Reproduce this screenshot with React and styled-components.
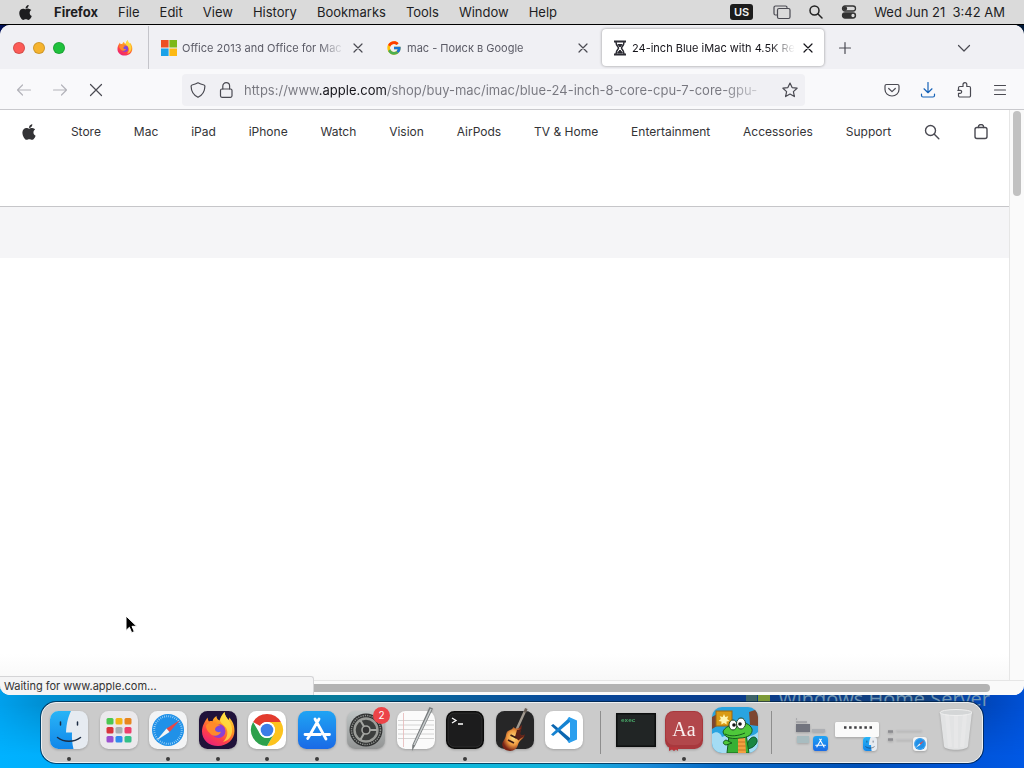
import React from 'react'
import styled, { createGlobalStyle, css } from 'styled-components'
import { FaApple } from 'react-icons/fa'
import { FcGoogle } from 'react-icons/fc'

const GlobalStyle = createGlobalStyle`
    * {
        box-sizing: border-box;
    }

    body {
        margin: 0;
        font-family: Inter, "Liberation Sans", sans-serif;
        color: #1d1d1f;
    }

    button, input {
        font-family: inherit;
        border: 0;
        padding: 0;
        background: none;
        color: inherit;
    }

    svg {
        display: block;
        flex: none;
    }
`;

const Desktop = styled.div`
    min-height: 100vh;
    display: grid;
    grid-template-rows: auto 1fr auto;
    position: relative;
    overflow: hidden;
    background: linear-gradient(90deg, #00105c, #000 2%, #000 98%, #001a3c) top / 100% 60px no-repeat, #0058e0;
`;

/* ---- system menu bar ---- */

const MenuBar = styled.header`
    display: flex;
    align-items: center;
    justify-content: space-between;
    height: 25px;
    padding: 0 19px 0 17px;
    background: #dadada;
    border-bottom: 1px solid #000;
    font-size: 13px;
`;

const MenuGroup = styled.div`
    display: flex;
    align-items: center;
    gap: ${props => props.gap}px;
`;

const MenuButton = styled.button`
    font-size: 13px;
    line-height: 24px;
    font-weight: ${props => props.strong ? 700 : 400};
`;

const InputSource = styled.span`
    margin-right: 3px;
    padding: 0 4px;
    border-radius: 3px;
    background: #1c1c1c;
    color: #f2f2f2;
    font-size: 11px;
    font-weight: 600;
    line-height: 16px;
`;

/* ---- browser window ---- */

const Window = styled.section`
    position: relative;
    z-index: 1;
    display: flex;
    flex-direction: column;
    border-radius: 10px;
    overflow: hidden;
    background: #fff;
`;

const TabBar = styled.div`
    display: flex;
    align-items: center;
    height: 44px;
    padding: 1px 52px 0 0;
    background: #f0f0f4;
`;

const Lights = styled.div`
    display: flex;
    gap: 8px;
    padding: 0 52px 0 13px;
`;

const Light = styled.button`
    width: 12px;
    height: 12px;
    border-radius: 50%;
    background: ${props => props.color};
    border: 1px solid rgba(0, 0, 0, .15);
`;

const PinnedTab = styled.div`
    display: flex;
    align-items: center;
    align-self: stretch;
    width: 32px;
    border-right: 1px solid #c4c4ca;
`;

const Tab = styled.div`
    display: flex;
    align-items: center;
    flex: 0 1 225px;
    min-width: 0;
    height: 37px;
    padding: 0 8px 0 12px;
    gap: 5px;
    border-radius: 4px;
    font-size: 11px;
    color: #5b5b66;

    ${props => props.active && css`
        flex-basis: 222px;
        margin-left: 3px;
        padding-left: 11px;
        color: #15141a;
        background: #fff;
        box-shadow: 0 0 3px rgba(0, 0, 0, .4);
    `}
`;

const TabTitle = styled.button`
    flex: 1;
    min-width: 0;
    overflow: hidden;
    white-space: nowrap;
    text-align: left;
    font-size: 11px;
    line-height: 16px;
    mask-image: linear-gradient(90deg, #000 calc(100% - 26px), transparent);
`;

const IconButton = styled.button`
    display: flex;
    align-items: center;
    justify-content: center;
    width: ${props => props.size || 16}px;
    height: ${props => props.size || 16}px;
    color: ${props => props.color || '#4a4a52'};
`;

const Spacer = styled.div`
    flex: 1;
`;

const Toolbar = styled.div`
    display: flex;
    align-items: center;
    height: 41px;
    padding: 1px 16px 0;
    background: #f9f9fb;
    border-bottom: 1px solid #c9c9cd;
`;

const ToolGroup = styled.div`
    display: flex;
    gap: 20px;
    flex: ${props => props.end ? '1 0 203px' : '1 0 166px'};
    justify-content: ${props => props.end ? 'flex-end' : 'flex-start'};
`;

const AddressBar = styled.form`
    display: flex;
    align-items: center;
    flex: 0 1 623px;
    height: 32px;
    padding: 0 7px 0 8px;
    gap: 12px;
    border-radius: 4px;
    background: #f0f0f4;
`;

/* the host part of the address is darker than the rest */
const Address = styled.input`
    flex: 1;
    min-width: 0;
    margin-right: -2px;
    margin-left: -2px;
    font-size: 13px;
    line-height: 20px;
    background: linear-gradient(90deg, #77777f 75px, #15141a 75px, #15141a 142px, #77777f 142px);
    background-clip: text;
    -webkit-background-clip: text;
    -webkit-text-fill-color: transparent;
    mask-image: linear-gradient(90deg, #000 calc(100% - 50px), transparent);
`;

const Viewport = styled.div`
    flex: 1;
    display: grid;
    grid-template-columns: 1fr 15px;
    grid-template-rows: 1fr 15px;
`;

const Page = styled.main`
    background: linear-gradient(#fff calc(100% - 26px), #f8f8f8);
`;

const SiteNav = styled.nav`
    display: flex;
    align-items: center;
    justify-content: space-between;
    height: 44px;
    padding: 0 20px;
`;

const NavLink = styled.a`
    color: #333336;
    font-size: 12px;
    line-height: 16px;
    text-decoration: none;
`;

const Ribbon = styled.div`
    height: 52px;
    margin-top: 52px;
    background: #f5f5f7;
    border-top: 1px solid #c6c6c9;
`;

const ScrollTrack = styled.div`
    background: #fafafa;
    border: 0 solid #e6e6e6;
    ${props => props.vertical
        ? 'border-left-width: 1px; padding: 1px 3px;'
        : 'border-top-width: 1px; padding: 3px 34px 2px 0; grid-column: 1 / 3;'}
`;

const ScrollThumb = styled.div`
    border-radius: 4px;
    ${props => props.vertical
        ? 'width: 8px; height: 85px; background: #c1c1c1;'
        : 'height: 8px; background: #b3b3b3;'}
`;

const Status = styled.div`
    position: absolute;
    left: 0;
    bottom: 0;
    width: 314px;
    height: 19px;
    padding-left: 4px;
    border: 1px solid #d4d4d6;
    border-left: 0;
    border-bottom: 0;
    border-radius: 0 3px 0 0;
    background: #f4f4f5;
    color: #333;
    font-size: 11px;
    line-height: 18px;
`;

const Cursor = styled.svg`
    position: absolute;
    z-index: 3;
    left: 125px;
    top: 615px;
`;

/* ---- dock ---- */

/* the wallpaper reaches a little way up behind the rounded window corners */
const DockArea = styled.footer`
    position: relative;
    margin-top: -20px;
    padding: 27px 41px 5px;
    background: linear-gradient(90deg, #00b2ff 0%, #00acf8 9%, #06b8e4 16%, #08bcd8 36%, #14b0dc 56%, #1a8cd8 63%, #0668c4 70%, #0050b8 84%, #0054d8 94%, #0058e4 100%);

    &::before {
        content: '';
        position: absolute;
        inset: 0;
        background: linear-gradient(90deg, #00a0ec 0%, #0090d4 4%, #0a7cae 14%, #08808f 22%, #077a9c 34%, #0a5c9c 46%, #08489a 56%, #0a3c8c 72%, #12407c 90%, #0048c0 97%, #0050d4 100%);
        mask-image: linear-gradient(#000 30px, transparent 80px);
    }
`;

const WallpaperLogo = styled.div`
    display: flex;
    align-items: center;
    gap: 8px;
    position: absolute;
    right: 34px;
    top: 12px;
    color: #7096b4;
    font-family: "Open Sans", sans-serif;
    font-size: 20px;
    line-height: 24px;
`;

const Dock = styled.div`
    position: relative;
    display: flex;
    align-items: stretch;
    height: 61px;
    padding: 0 7px 0 8px;
    border: 1px solid #eef0f2;
    border-radius: 15px;
    background: #cbcbcb;
    box-shadow: 0 0 0 1px rgba(0, 30, 60, .7);
`;

const DockGroup = styled.div`
    display: flex;
    align-items: center;
    justify-content: space-between;
    flex: ${props => props.grow ? 1 : 'none'};
    gap: ${props => props.gap || 0}px;
`;

const Divider = styled.div`
    width: 1px;
    margin: 8px ${props => props.right}px 8px ${props => props.left}px;
    background: #8e8e8e;
`;

const DockButton = styled.button`
    position: relative;
    display: flex;
    align-items: ${props => props.low ? 'flex-end' : 'center'};
    justify-content: center;
    width: ${props => props.wide || 38}px;
    height: 59px;
    padding-bottom: ${props => props.low ? 10 : 5}px;

    & > svg {
        filter: drop-shadow(0 1px 1px rgba(0, 0, 0, .2));
    }

    ${props => props.running && css`
        &::after {
            content: '';
            position: absolute;
            left: calc(50% - 2px);
            bottom: 1px;
            width: 4px;
            height: 4px;
            border-radius: 50%;
            background: #3c3c3c;
        }
    `}
`;

const Badge = styled.span`
    position: absolute;
    top: 4px;
    right: -5px;
    width: 17px;
    height: 17px;
    border-radius: 50%;
    background: #ec4448;
    color: #fff;
    font-size: 10px;
    line-height: 17px;
`;

/* ---- icons ---- */

const Line = ({ size = 16, width = 1.2, box = 16, children }) => (
    <svg width={size} height={size} viewBox={`0 0 ${box} ${box}`} fill="none" stroke="currentColor"
        strokeWidth={width} strokeLinecap="round" strokeLinejoin="round">
        {children}
    </svg>
)

const CloseIcon = ({ size = 16 }) => <Line size={size}><path d="M4 4l8 8M12 4l-8 8" /></Line>

const FirefoxArt = () => (
    <g>
        <path d="M19 35C10 35 3 29 3 20.500 3 15 5.500 11 8.500 6.500c.2 1.500.7 3 1.500 4 1.300-.7 2.500-.6 3.500-.3C14 8 15.500 6 17.500 5c0 2 1 3.500 3 4.500 1-3 2.500-6 5-8.500.5 4 2.500 6 4 8 .5-.5.7-1.500.6-2.500C33.500 10 35.500 14 35.500 20 35.500 28.500 28 35 19 35z" fill="url(#ffBody)" />
        <path d="M25.500 1c.5 4 2.500 6 4 8 3 4 4 8 3.500 12-.8 6-5 9-9 10 4-4 5-8 4-12s-6-6-7-9.500c1-3 2.500-6 4.500-8.500z" fill="#ffe244" opacity=".8" />
        <circle cx="19.500" cy="20" r="7" fill="url(#ffGlobe)" />
        <path d="M7 14.500c2-3 6-3.500 9-1.500 2-.2 4 0 5.500 1.200-3 .3-4.800 1.800-5.300 3.300-.8 2.500 2 4.500 5.800 3.300-2 5-9 5-11.500 1C8.500 20 7 18 7 14.500z" fill="#ff8a2a" />
    </g>
)

const Defs = () => (
    <svg width="0" height="0" style={{ position: 'absolute' }} aria-hidden="true">
        <defs>
            <linearGradient id="ffBody" x1=".8" y1="0" x2=".25" y2="1">
                <stop offset="0" stopColor="#ffe03c" />
                <stop offset=".4" stopColor="#ff9422" />
                <stop offset=".7" stopColor="#ff4148" />
                <stop offset="1" stopColor="#e8207c" />
            </linearGradient>
            <radialGradient id="ffGlobe">
                <stop offset="0" stopColor="#6a55e8" />
                <stop offset="1" stopColor="#9a3ac8" />
            </radialGradient>
            <linearGradient id="finderBlue" x2="0" y2="1">
                <stop offset="0" stopColor="#29b4f6" />
                <stop offset="1" stopColor="#1187ea" />
            </linearGradient>
            <linearGradient id="storeBlue" x2="0" y2="1">
                <stop offset="0" stopColor="#1fa4f4" />
                <stop offset="1" stopColor="#1a6ae6" />
            </linearGradient>
            <linearGradient id="steel" x2="0" y2="1">
                <stop offset="0" stopColor="#c0c6c6" />
                <stop offset="1" stopColor="#929494" />
            </linearGradient>
            <radialGradient id="sunburst" cx=".5" cy=".5">
                <stop offset="0" stopColor="#ffdc80" />
                <stop offset=".55" stopColor="#f09a40" />
                <stop offset="1" stopColor="#7a2416" />
            </radialGradient>
        </defs>
    </svg>
)

const Tile = ({ fill, children, size = 38 }) => (
    <svg width={size} height={size} viewBox="0 0 38 38" overflow="visible">
        <rect width="38" height="38" rx="8.500" fill={fill} />
        {children}
    </svg>
)

const FinderIcon = ({ size }) => (
    <Tile fill="#e6ebf1" size={size}>
        <path d="M8.500 0H21c-2.500 5-4.500 12-5 21.500h6c-.3 6 .2 11 1.500 16.500h-15A8.500 8.500 0 0 1 0 29.500v-21A8.500 8.500 0 0 1 8.500 0z" fill="url(#finderBlue)" />
        <path d="M10.500 11v3M27.500 11v3" stroke="#1c2c44" strokeWidth="1.500" strokeLinecap="round" />
        <path d="M7.500 26.500c6.500 5 16.500 5 23 0" stroke="#1c2c44" strokeWidth="1.500" fill="none" strokeLinecap="round" />
    </Tile>
)

const launchColors = ['#4cc750', '#f3b414', '#e8861e', '#d8343c', '#a9adb0', '#ec3f6c', '#9a4fd0', '#2f8cee', '#33c088']

const LaunchpadIcon = () => (
    <Tile fill="#ebe9ec">
        {launchColors.map((color, i) => (
            <rect key={color} x={6.5 + (i % 3) * 9} y={7 + Math.floor(i / 3) * 9} width="7" height="6.500" rx="1.500" fill={color} />
        ))}
    </Tile>
)

const SafariIcon = ({ size }) => (
    <Tile fill="#f3f4f5" size={size}>
        <circle cx="19" cy="19" r="16" fill="#2091e8" />
        <circle cx="19" cy="19" r="13.800" fill="none" stroke="#c8e8fc" strokeWidth="2" strokeDasharray=".6 1.500" />
        <path d="M31 9L20.500 21l-3-3.500z" fill="#e84848" />
        <path d="M7.500 29.500l10-12 3 3.500z" fill="#f4f4f4" />
    </Tile>
)

const FirefoxIcon = () => <Tile fill="#20123a"><FirefoxArt /></Tile>

const ChromeIcon = () => (
    <Tile fill="#fff">
        <path d="M5.100 11A16 16 0 0 1 32.900 11H19a8 8 0 0 0-6.900 4z" fill="#e33b2e" />
        <path d="M32.900 11A16 16 0 0 1 19 35l6.900-12a8 8 0 0 0-6.900-12z" fill="#fcc31e" />
        <path d="M19 35A16 16 0 0 1 5.100 11l7 12a8 8 0 0 0 13.800 0z" fill="#2da14c" />
        <circle cx="19" cy="19" r="8" fill="#fff" />
        <circle cx="19" cy="19" r="6.300" fill="#3b7ee8" />
    </Tile>
)

const StoreIcon = ({ size }) => (
    <Tile fill="url(#storeBlue)" size={size}>
        <path d="M21 8L11 25.500M17 8l11 20M7 23.500h15.500M26.500 23.500h5M9.700 27.500l.8-1.300" stroke="#fff" strokeWidth="2.800" strokeLinecap="round" fill="none" />
    </Tile>
)

const SettingsIcon = () => (
    <Tile fill="url(#steel)">
        <circle cx="19" cy="19" r="16.500" fill="#303232" />
        <circle cx="19" cy="19" r="14.500" fill="none" stroke="#8c8f8c" strokeWidth="1.500" strokeDasharray="1.300 1" />
        <circle cx="19" cy="19" r="11.500" fill="#3c3e3d" stroke="#9b9d99" strokeWidth="2.400" />
        <path d="M19 19h11M19 19l-5.500-9.500M19 19l-5.500 9.500" stroke="#a4a6a2" strokeWidth="2" />
        <circle cx="19" cy="19" r="4" fill="#333" stroke="#a4a6a2" strokeWidth="1.600" />
    </Tile>
)

const TextEditIcon = () => (
    <Tile fill="#fbfbfb">
        <path d="M1 9.500h36M1 14h36M1 18.500h36M1 23h36M1 27.500h36" stroke="#d4d4d4" strokeWidth="1" />
        <path d="M6.500 2v34" stroke="#e6b8b8" strokeWidth=".8" />
        <path d="M32.500-4l3.500 1.500L18 35l-3 5 .3-6z" fill="#777b7d" />
        <path d="M34-2L17 34" stroke="#c8cccd" strokeWidth="1.500" />
    </Tile>
)

const TerminalIcon = () => (
    <Tile fill="#0b0b0b">
        <rect x="2" y="2" width="34" height="34" rx="6.500" fill="#1c1c1d" stroke="#333" strokeWidth=".8" />
        <path d="M6 7l4 2.500L6 12M12 13h5" stroke="#fff" strokeWidth="1.300" fill="none" />
    </Tile>
)

const GuitarIcon = () => (
    <Tile fill="#262627">
        <path d="M29.500-1l-10 22" stroke="#a29a90" strokeWidth="2.400" />
        <path d="M29-3l2.500 1-1.500 4-2.300-1z" fill="#6b6058" />
        <path d="M17.500 16c-1 2-2 2.500-4.500 3.500-3 1-2.500 3.500-3.500 6.500-1.500 4-4 5-3 9 1.500 5 9 6.500 13 3 3-2.800 2-5.500 4.500-8 2-2.200 5-3 4.500-7-.5 1.500-3 2.500-4.300.8-1.500-2.500 2.300-6 1.300-10-1.500 3.500-5 5.200-8 2.200z" fill="url(#sunburst)" />
        <path d="M21 19c2.500.5 4-1 4.800-3-.5 3-1.500 5-1.500 7 1 2 3.500 2 4.500.5-1 3-4 3-6 6l-4-3z" fill="#5c2018" />
        <path d="M12 29l6 3M14.500 24l6 3" stroke="#3b1a14" strokeWidth="1.800" />
    </Tile>
)

const CodeIcon = () => (
    <Tile fill="#fff">
        <path d="M6 14.500l2.200-1.500L25 27v5z" fill="#0b66b0" />
        <path d="M6 23.500L8.200 25 25 11V6z" fill="#1583d2" />
        <path d="M24 6l8 3.500v19L24 32l-1.500-1.500L25 28V10l-2.500-2.500z" fill="#2b9fee" />
    </Tile>
)

const ExecIcon = () => (
    <svg width="40" height="34" viewBox="0 0 40 34">
        <rect width="40" height="34" fill="#0d0f0f" />
        <rect x="1.500" y="1.500" width="37" height="31" fill="#212525" />
        <text x="5" y="9" fontFamily="Liberation Mono, monospace" fontSize="6" fontWeight="700" fill="#48a868">exec</text>
    </svg>
)

const DictionaryIcon = () => (
    <Tile fill="#a8383d">
        <path d="M4 36h9v4l-2-1.500L9 40l-2-1.500L4 40z" fill="#b8343a" />
        <rect x="1" y="1" width="36" height="33" rx="7.500" fill="#b2474b" />
        <text x="19" y="25" textAnchor="middle" fontFamily="Liberation Serif, serif" fontSize="20" fill="#f8eeee">Aa</text>
    </Tile>
)

const CrocIcon = () => (
    <svg width="46" height="46" viewBox="0 0 46 46">
        <defs>
            <clipPath id="crocTile"><rect width="46" height="46" rx="10" /></clipPath>
        </defs>
        <g clipPath="url(#crocTile)">
            <rect width="46" height="46" fill="#29a4e0" />
            <path d="M0 27c5-4 9 0 10 3 6-3 12 0 13 3 8-4 17-2 23-8v21H0z" fill="#a4dcf4" />
            <path d="M37 5l9-3v17l-8-1zM0 10l5-3v12l-5 3z" fill="#7d4630" />
            <rect x="4" y="4" width="16" height="15" fill="#d99a14" stroke="#9c6510" strokeWidth="1" />
            <path d="M12 7l1.300 3 3-.8-1.200 2.800 2.400 2-3 .6.2 3-2.700-1.600-2.700 1.600.2-3-3-.6 2.400-2L7.700 9.200l3 .8z" fill="#fff4b0" />
            <path d="M36 35c4-8 10-5 9 0-2 5-7 7-11 7z" fill="#198642" stroke="#0c5628" />
            <path d="M17 28l17-1 3 19H15z" fill="#37b034" stroke="#145c1c" />
            <path d="M26 31l7-1 1 16h-8z" fill="#f2a040" />
            <path d="M26 35h7M26 39h8M26 43h8" stroke="#c87424" strokeWidth="1" />
            <path d="M11 25c1-5 8-7 15-9 7-1 12 1 14 6 1 5-4 9-12 9-6 1-15 1-17-6z" fill="#4ec83a" stroke="#145c1c" />
            <path d="M13 27c6 3 13 2 20-1" stroke="#145c1c" fill="none" />
            <path d="M14 33c-3 1-4 4 0 5l6-2z" fill="#4ec83a" stroke="#145c1c" />
            <ellipse cx="21" cy="18" rx="4" ry="5" fill="#fff" stroke="#1b4020" />
            <ellipse cx="29" cy="16.500" rx="4.500" ry="5.500" fill="#fff" stroke="#1b4020" />
            <circle cx="22" cy="18" r="1.800" fill="#151515" />
            <circle cx="28" cy="17" r="1.800" fill="#151515" />
        </g>
    </svg>
)

const TrashIcon = () => (
    <svg width="34" height="42" viewBox="0 0 34 42">
        <path d="M1 3l4 34c.5 5 23.500 5 24 0l4-34z" fill="#e2e3e4" />
        <path d="M8 5l3 33M17 6v33M26 5l-3 33" stroke="#ececec" strokeWidth="4" opacity=".5" />
        <ellipse cx="17" cy="3.500" rx="16" ry="3" fill="#d4d6d7" stroke="#f0f0f0" strokeWidth="1" />
    </svg>
)

const MiniStore = () => (
    <svg width="34" height="34" viewBox="0 0 34 34">
        <path d="M1 1h1M1 4h11" stroke="#8c8c92" />
        <rect x="1" y="6" width="14" height="8" fill="#72747e" />
        <rect x="17" y="11" width="13" height="3" fill="#aeb0b4" />
        <rect x="2" y="18" width="12" height="7" fill="#a8bcc0" />
        <svg x="18" y="18" width="15" height="15"><StoreIcon size={15} /></svg>
    </svg>
)

const MiniFinder = () => (
    <svg width="44" height="30" viewBox="0 0 44 30">
        <rect width="44" height="15" rx="1.500" fill="#fafafa" />
        <path d="M9 5.500h28" stroke="#3f3f42" strokeWidth="2.500" strokeDasharray="2.500 2.600" />
        <svg x="28" y="15" width="14" height="14"><FinderIcon size={14} /></svg>
    </svg>
)

const MiniSafari = () => (
    <svg width="42" height="26" viewBox="0 0 42 26">
        <path d="M1 5.500h5M1 13.500h5" stroke="#8c8c90" strokeWidth="2.500" />
        <path d="M9 4.500h26M9 13.500h16" stroke="#c2c2c4" strokeWidth="1" />
        <svg x="26" y="11" width="14" height="14"><SafariIcon size={14} /></svg>
    </svg>
)

const menus = ['File', 'Edit', 'View', 'History', 'Bookmarks', 'Tools', 'Window', 'Help']

const navLinks = ['Store', 'Mac', 'iPad', 'iPhone', 'Watch', 'Vision', 'AirPods', 'TV & Home',
    'Entertainment', 'Accessories', 'Support']

const dockApps = [
    { name: 'Finder', icon: <FinderIcon />, running: true },
    { name: 'Launchpad', icon: <LaunchpadIcon /> },
    { name: 'Safari', icon: <SafariIcon />, running: true },
    { name: 'Firefox', icon: <FirefoxIcon />, running: true },
    { name: 'Chrome', icon: <ChromeIcon />, running: true },
    { name: 'App Store', icon: <StoreIcon />, running: true },
    { name: 'System Settings', icon: <SettingsIcon />, badge: 2 },
    { name: 'TextEdit', icon: <TextEditIcon /> },
    { name: 'Terminal', icon: <TerminalIcon />, running: true },
    { name: 'GarageBand', icon: <GuitarIcon /> },
    { name: 'Code', icon: <CodeIcon /> },
]

const SystemMenu = () => (
    <MenuBar>
        <MenuGroup gap={20}>
            <MenuButton aria-label="Apple menu"><FaApple size={17} /></MenuButton>
            <MenuButton strong>Firefox</MenuButton>
            {menus.map(menu => <MenuButton key={menu}>{menu}</MenuButton>)}
        </MenuGroup>
        <MenuGroup gap={17}>
            <InputSource>US</InputSource>
            <IconButton aria-label="Screens" size={18}>
                <Line size={18} box={18}>
                    <path d="M4 12H2.500A1.500 1.500 0 0 1 1 10.500v-6A1.500 1.500 0 0 1 2.500 3h10A1.500 1.500 0 0 1 14 4.500" />
                    <rect x="4.500" y="5.500" width="12.500" height="10" rx="1.500" />
                </Line>
            </IconButton>
            <IconButton aria-label="Search" color="#222">
                <Line width={1.5}><circle cx="6.500" cy="6.500" r="4.500" /><path d="M10 10l4 4" /></Line>
            </IconButton>
            <IconButton aria-label="Control centre" color="#333">
                <Line width={1.3}>
                    <rect x="1.500" y="2" width="13" height="5" rx="2.500" />
                    <circle cx="4" cy="4.500" r="1.500" fill="currentColor" />
                    <rect x="1.500" y="9" width="13" height="5" rx="2.500" fill="currentColor" />
                    <circle cx="12" cy="11.500" r="1" fill="#ddd" stroke="#ddd" />
                </Line>
            </IconButton>
            <MenuButton>Wed Jun 21 &nbsp;3:42 AM</MenuButton>
        </MenuGroup>
    </MenuBar>
)

const Tabs = () => (
    <TabBar>
        <Lights>
            <Light color="#fc5b57" aria-label="Close window" />
            <Light color="#f5b32e" aria-label="Minimise window" />
            <Light color="#1fc13c" aria-label="Zoom window" />
        </Lights>
        <PinnedTab>
            <svg width="16" height="16" viewBox="2 1 35 35"><FirefoxArt /></svg>
        </PinnedTab>
        <Tab>
            <svg width="16" height="16" viewBox="0 0 16 16">
                <path d="M0 0h7.600v7.600H0z" fill="#ee5023" />
                <path d="M8.400 0H16v7.600H8.400z" fill="#7cb81a" />
                <path d="M0 8.400h7.600V16H0z" fill="#1ba2e8" />
                <path d="M8.400 8.400H16V16H8.400z" fill="#fcb913" />
            </svg>
            <TabTitle>Office 2013 and Office for Mac</TabTitle>
            <IconButton aria-label="Close tab"><CloseIcon /></IconButton>
        </Tab>
        <Tab>
            <FcGoogle size={16} />
            <TabTitle>mac - Поиск в Google</TabTitle>
            <IconButton aria-label="Close tab"><CloseIcon /></IconButton>
        </Tab>
        <Tab active>
            <svg width="14" height="16" viewBox="0 0 14 16" fill="none" stroke="#2b2b33">
                <path d="M1 1.500h12M1 14.500h12" strokeWidth="2" />
                <path d="M3 2c0 4 2.500 4.500 2.500 6S3 10 3 14M11 2c0 4-2.500 4.500-2.500 6s2.500 2 2.500 6" strokeWidth="1.500" />
                <path d="M5 4.500h4L7 7zM4.500 13L7 10l2.500 3z" fill="#2b2b33" />
            </svg>
            <TabTitle>24-inch Blue iMac with 4.5K Ret</TabTitle>
            <IconButton aria-label="Close tab" color="#15141a"><CloseIcon /></IconButton>
        </Tab>
        <IconButton aria-label="New tab" size={42}><Line><path d="M8 2.500v11M2.500 8h11" /></Line></IconButton>
        <Spacer />
        <IconButton aria-label="List all tabs"><Line><path d="M2.500 5.500L8 11l5.500-5.500" /></Line></IconButton>
    </TabBar>
)

const BrowserToolbar = () => (
    <Toolbar>
        <ToolGroup>
            <IconButton aria-label="Back" color="#b4b4ba"><Line><path d="M14.500 8h-13M6.500 3L1.500 8l5 5" /></Line></IconButton>
            <IconButton aria-label="Forward" color="#b4b4ba"><Line><path d="M1.500 8h13M9.500 3l5 5-5 5" /></Line></IconButton>
            <IconButton aria-label="Stop"><Line><path d="M2.500 2.500l11 11M13.500 2.500l-11 11" /></Line></IconButton>
        </ToolGroup>
        <AddressBar onSubmit={e => e.preventDefault()}>
            <IconButton type="button" aria-label="Tracking protection">
                <Line><path d="M8 .8c2 1.200 4 1.800 6 2.200.6.200.9.500.9 1.200-.1 5-2.400 8.800-6.900 11.100C3.500 13 1.200 9.200 1.100 4.200c0-.7.3-1 .9-1.200 2-.4 4-1 6-2.200z" /></Line>
            </IconButton>
            <IconButton type="button" aria-label="Site information">
                <Line><rect x="2.500" y="7" width="11.500" height="8.300" rx="1.500" /><path d="M4.800 7V4a3.400 3.400 0 0 1 6.800 0v3" /></Line>
            </IconButton>
            <Address aria-label="Address"
                defaultValue="https://www.apple.com/shop/buy-mac/imac/blue-24-inch-8-core-cpu-7-core-gpu-" />
            <IconButton type="button" aria-label="Bookmark this page">
                <Line><path d="M8 1l2.100 4.600 5 .6-3.700 3.400 1 5L8 12.100l-4.400 2.500 1-5L.9 6.200l5-.6z" /></Line>
            </IconButton>
        </AddressBar>
        <ToolGroup end>
            <IconButton aria-label="Save to Pocket">
                <Line><path d="M2.500 2.500h11A1.500 1.500 0 0 1 15 4v3.500a7 6.500 0 0 1-14 0V4a1.500 1.500 0 0 1 1.500-1.500zM4.700 6.500L8 9.600l3.300-3.100" /></Line>
            </IconButton>
            <IconButton aria-label="Downloads" color="#1562b8">
                <Line><path d="M8 .5v10M4 6.800l4 3.900 4-3.900M1.500 12v1.500a1.500 1.500 0 0 0 1.500 1.500h10a1.500 1.500 0 0 0 1.500-1.500V12" /></Line>
            </IconButton>
            <IconButton aria-label="Extensions">
                <Line><path d="M7 4.500V2.600a1.900 1.900 0 0 1 3.800 0v1.900h2.400A1.300 1.300 0 0 1 14.500 5.800v7.900a1.300 1.300 0 0 1-1.300 1.300H3.800a1.300 1.300 0 0 1-1.300-1.300v-2.400h1.700a1.500 1.500 0 0 0 0-3H1.800M2.500 8.300V5.800a1.300 1.300 0 0 1 1.300-1.300H7" /></Line>
            </IconButton>
            <IconButton aria-label="Application menu"><Line><path d="M2.500 3.500h11M2.500 8h11M2.500 12.500h11" /></Line></IconButton>
        </ToolGroup>
    </Toolbar>
)

const Site = () => (
    <Page>
        <SiteNav>
            <NavLink href="#apple" aria-label="Apple"><FaApple size={18} /></NavLink>
            {navLinks.map(link => <NavLink key={link} href="#">{link}</NavLink>)}
            <IconButton aria-label="Search apple.com">
                <Line width={1.4}><circle cx="6.500" cy="6.500" r="5" /><path d="M10.300 10.300l4.500 4.500" /></Line>
            </IconButton>
            <IconButton aria-label="Shopping bag">
                <Line width={1.4}><rect x="2" y="3.500" width="12" height="11" rx="2" /><path d="M5.300 3.500a2.700 3 0 0 1 5.400 0" /></Line>
            </IconButton>
        </SiteNav>
        <Ribbon />
    </Page>
)

const DockBar = () => (
    <DockArea>
        <WallpaperLogo>
            <svg width="24" height="22" viewBox="0 0 24 22">
                <path d="M0 4h11v12H0z" fill="#3f6468" />
                <path d="M12 4h12v9H12z" fill="#7c9a38" />
                <path d="M12 13h12v3H12z" fill="#b0a848" />
            </svg>
            Windows Home Server
        </WallpaperLogo>
        <Dock>
            <DockGroup grow>
                {dockApps.map(app => (
                    <DockButton key={app.name} aria-label={app.name} running={app.running}>
                        {app.icon}
                        {app.badge && <Badge>{app.badge}</Badge>}
                    </DockButton>
                ))}
            </DockGroup>
            <Divider left={17} right={15} />
            <DockGroup gap={7}>
                <DockButton aria-label="exec" wide={40}><ExecIcon /></DockButton>
                <DockButton aria-label="Dictionary" wide={42} running><DictionaryIcon /></DockButton>
                <DockButton aria-label="Croc game" wide={46}><CrocIcon /></DockButton>
            </DockGroup>
            <Divider left={13} right={23} />
            <DockGroup gap={6}>
                <DockButton aria-label="App Store window" wide={34} low><MiniStore /></DockButton>
                <DockButton aria-label="Finder window" wide={44} low><MiniFinder /></DockButton>
                <DockButton aria-label="Safari window" wide={46} low><MiniSafari /></DockButton>
                <DockButton aria-label="Trash" wide={38}><TrashIcon /></DockButton>
            </DockGroup>
        </Dock>
    </DockArea>
)

const App = () => (
    <Desktop>
        <GlobalStyle />
        <SystemMenu />
        <Window>
            <Tabs />
            <BrowserToolbar />
            <Viewport>
                <Site />
                <ScrollTrack vertical><ScrollThumb vertical /></ScrollTrack>
                <ScrollTrack><ScrollThumb /></ScrollTrack>
            </Viewport>
            <Status>Waiting for www.apple.com...</Status>
        </Window>
        <DockBar />
        <Defs />
        <Cursor width="13" height="19" viewBox="0 0 13 19">
            <path d="M1 1v14.500l3.400-3.200 2.300 5.400 2.600-1.100-2.300-5.300h4.700z" fill="#000" stroke="#fff" />
        </Cursor>
    </Desktop>
)

export default App
